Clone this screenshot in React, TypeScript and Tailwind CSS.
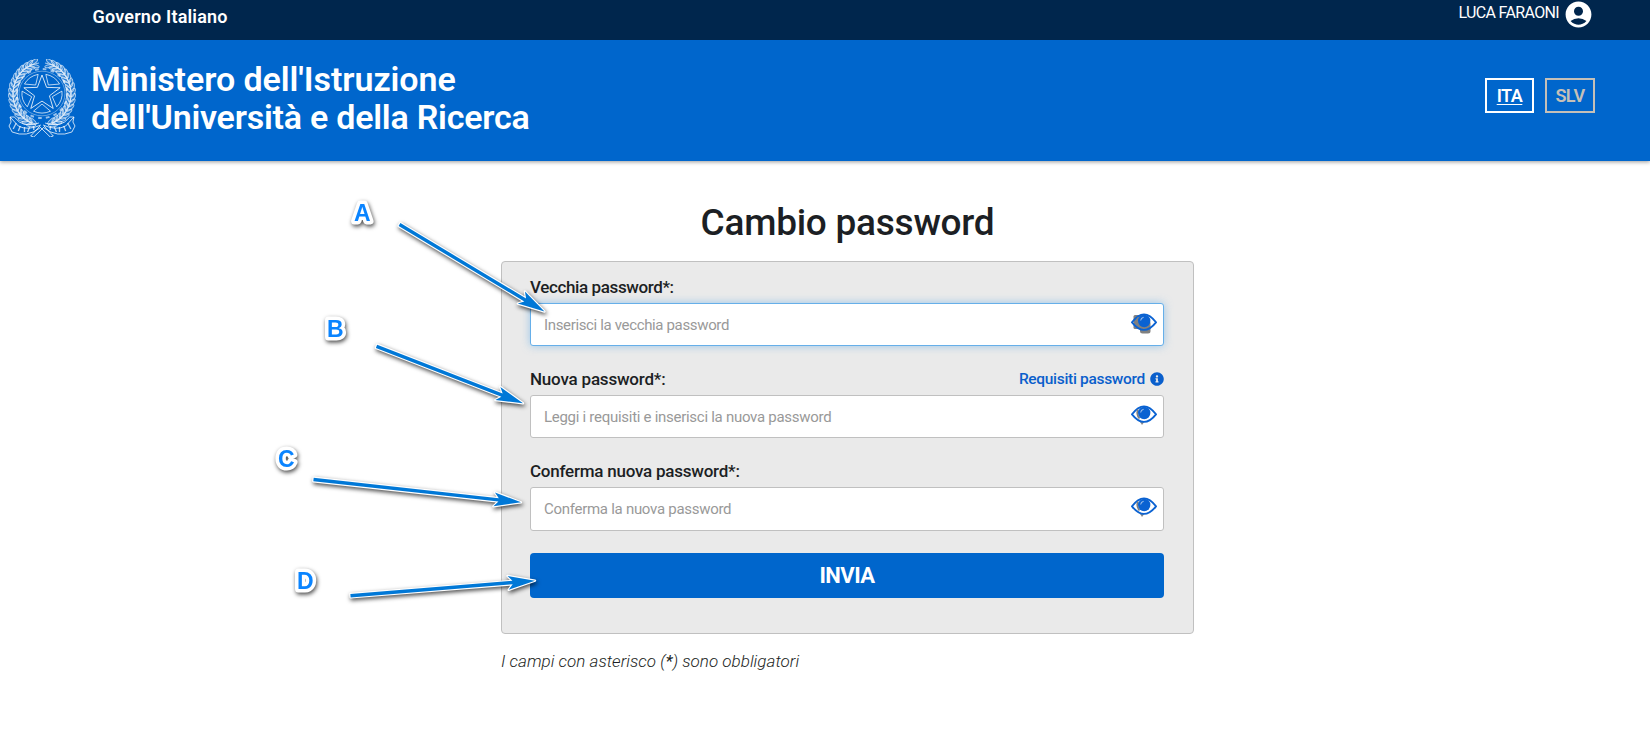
import { FaInfoCircle } from 'react-icons/fa';
import { MdAccountCircle } from 'react-icons/md';

const fields = [
  {
    id: 'old',
    label: 'Vecchia password*:',
    placeholder: 'Inserisci la vecchia password',
    labelClass: 'tracking-[-0.38px]',
    boxClass: 'h-[43px] border-[#66afe9] shadow-[0_0_8px_rgba(102,175,233,0.6)]',
    inputClass: 'tracking-[-0.35px]',
  },
  {
    id: 'new',
    label: 'Nuova password*:',
    placeholder: 'Leggi i requisiti e inserisci la nuova password',
    labelClass: 'tracking-[-0.2px]',
    boxClass: 'h-[43px] border-[#c0c0c0]',
    inputClass: 'tracking-[-0.28px]',
  },
  {
    id: 'confirm',
    label: 'Conferma nuova password*:',
    placeholder: 'Conferma la nuova password',
    labelClass: 'tracking-[-0.23px]',
    boxClass: 'h-[44px] border-[#c0c0c0]',
    inputClass: 'tracking-[-0.28px]',
  },
];

// x, y = start of the arrow; tx, ty = tip
const arrows = [
  { x: 399.5, y: 224.5, tx: 544.5, ty: 311.5, letter: 'A', lx: 354, ly: 221 },
  { x: 376.5, y: 346.3, tx: 523, ty: 403.3, letter: 'B', lx: 327, ly: 336.5 },
  { x: 313.5, y: 479.5, tx: 521, ty: 502.3, letter: 'C', lx: 278, ly: 466.5 },
  { x: 350.5, y: 595.7, tx: 535, ty: 580.7, letter: 'D', lx: 297, ly: 588.5 },
];

function polar(cx: number, cy: number, r: number, deg: number) {
  const a = (deg * Math.PI) / 180;
  return [cx + r * Math.sin(a), cy - r * Math.cos(a)];
}

function Emblem() {
  const star = Array.from({ length: 10 }, (_, i) => polar(33, 34.5, i % 2 ? 7.6 : 18.5, i * 36).join(',')).join(' ');
  const leaves = Array.from({ length: 17 }, (_, i) => 14 + i * 9);

  return (
    <svg className="h-[78px] w-[68px] shrink-0" viewBox="0 0 66 78" preserveAspectRatio="none" fill="none" stroke="#fff" strokeWidth="0.95">
      <circle cx="33" cy="34.5" r="24.5" strokeWidth="2" strokeDasharray="3.6 4.1" opacity="0.6" />
      <circle cx="33" cy="34.5" r="22.3" opacity="0.4" />
      <polygon points={star} opacity="0.85" />
      {[36, 108, 180, 252, 324].map((d) => {
        const a = polar(33, 34.5, 10.5, d);
        const b = polar(33, 34.5, 19.5, d - 25);
        const c = polar(33, 34.5, 19.5, d + 25);
        return (
          <path key={d} opacity="0.75" d={`M${a[0]} ${a[1]}L${b[0]} ${b[1]}A19.5 19.5 0 0 1 ${c[0]} ${c[1]}Z`} />
        );
      })}
      {[-1, 1].map((s) => (
        <g key={s} transform={s === 1 ? 'translate(33 0)' : 'translate(33 0) scale(-1 1)'}>
          {leaves.map((d) => {
            const a = (d * Math.PI) / 180;
            const x = 28 * Math.sin(a);
            const y = 35 - 31 * Math.cos(a);
            return (
              <g key={d} transform={`translate(${x} ${y}) rotate(${d})`} opacity="0.65">
                <ellipse cx="0" cy="-2.3" rx="4.6" ry="1.7" transform="rotate(22)" fill="#fff" fillOpacity="0.2" />
                <ellipse cx="0" cy="2.3" rx="4.4" ry="1.5" transform="rotate(-22)" fill="#fff" fillOpacity="0.2" />
                <path d="M-4 0H4" />
              </g>
            );
          })}
          <path opacity="0.8" d="M1 66Q14 72 23 67L31 58L30 63L32 67L29 73Q15 79 2 69M3 64Q14 68 22 63L27 58L31 58M2 67L11 77L8 78L-2 68" />
          <path opacity="0.7" d="M8 67V71M12 68L14 73M17 68V73M21 67L23 72M25 64L28 70" strokeWidth="1.3" />
        </g>
      ))}
    </svg>
  );
}

function Eye({ first }: { first?: boolean }) {
  return (
    <svg className="absolute top-[9px] right-[6.5px] h-[22px] w-[26px]" viewBox="0 0 26 22">
      {first ? (
        <g fill="#808080">
          <rect x="2.5" y="2" width="13" height="14" rx="1.5" />
          <rect x="9" y="8" width="10.5" height="12.5" rx="2.5" />
        </g>
      ) : (
        <path d="M6 12L11 20L15.5 14" fill="#888" />
      )}
      <path d="M1 9.3Q13 -6.5 25 9.3Q13 24.5 1 9.3Z" fill={first ? 'none' : '#fff'} stroke="#0a62d2" strokeWidth="1.9" />
      <path d="M7 4.5Q5 9 8.5 13.5" fill="none" stroke="#808080" strokeWidth="1.8" />
      <circle cx="13.2" cy="8" r="6.2" fill="#0a62d2" />
      <path d="M9.6 7.5Q10 4.8 12.6 4.2" fill="none" stroke="#9dbde8" strokeWidth="1.1" />
    </svg>
  );
}

function Annotations() {
  return (
    <svg className="pointer-events-none absolute top-0 left-0 h-[736px] w-[600px] drop-shadow-[1.5px_2px_2px_rgba(0,0,0,0.7)]" viewBox="0 0 600 736">
      {arrows.map((a) => {
        const len = Math.hypot(a.tx - a.x, a.ty - a.y);
        const angle = (Math.atan2(a.ty - a.y, a.tx - a.x) * 180) / Math.PI;
        return (
          <g key={a.letter} strokeLinejoin="round">
            <path
              transform={`translate(${a.tx} ${a.ty}) rotate(${angle})`}
              d={`M0 0L-27 -7L-22.5 -1.7H${-len}V1.7H-22.5L-27 7Z`}
              fill="#0078d7"
              stroke="#fff"
              strokeWidth="2.4"
              paintOrder="stroke"
            />
            <text
              x={a.lx}
              y={a.ly}
              className="font-['Liberation_Sans',sans-serif] text-[23px] font-bold"
              fill="#0a84ff"
              stroke="#fff"
              strokeWidth="7"
              paintOrder="stroke"
            >
              {a.letter}
            </text>
          </g>
        );
      })}
    </svg>
  );
}

export default function App() {
  return (
    <div className="relative h-[736px] w-[1650px] overflow-hidden bg-white font-[Roboto,sans-serif] text-[#1c1f24]">
      <header className="text-white shadow-[0_1px_4px_rgba(0,0,0,0.4)]">
        <div className="flex h-10 justify-between bg-[#00264d] pr-[56px] pl-[92.5px]">
          <span className="pt-[5px] text-[18px] leading-6 font-semibold tracking-[0.18px]">Governo Italiano</span>
          <div className="flex">
            <span className="pt-[2px] text-[16px] leading-[22px] tracking-[-0.65px]">LUCA FARAONI</span>
            <MdAccountCircle className="-mt-[1px] ml-[4px] h-[31px] w-[31px]" />
          </div>
        </div>
        <div className="flex h-[121px] bg-[#0066cc] pr-[55px] pl-2">
          <div className="pt-[19px]">
            <Emblem />
          </div>
          <h1 className="ml-[15px] pt-[20px] text-[34px] leading-[38px] font-semibold">
            <span className="block tracking-[-0.06px]">Ministero dell'Istruzione</span>
            <span className="block tracking-[-0.23px]">dell'Università e della Ricerca</span>
          </h1>
          <div className="mt-[38px] ml-auto flex gap-[11px] text-[18px] leading-[31px] font-semibold tracking-[-0.5px]">
            <a className="h-[35px] w-[49px] border-2 border-white text-center underline underline-offset-2">ITA</a>
            <a className="h-[35px] w-[50px] border-2 border-[#c5c0b8] text-center text-[#c5c0b8]">SLV</a>
          </div>
        </div>
      </header>

      <main className="ml-[501px] w-[693px]">
        <h2 className="h-[100px] pt-[37px] text-center text-[37px] leading-[50px] font-medium tracking-[-0.25px]">Cambio password</h2>
        <form className="h-[373px] rounded border border-[#c0c0c0] bg-[#eaeaea] px-[29px] pt-[14px] pl-[28px]">
          {fields.map((f) => (
            <div key={f.id} className="mb-[22px]">
              <div className="flex h-[27px] justify-between">
                <label className={`text-[17px] leading-[23px] font-medium ${f.labelClass}`}>{f.label}</label>
                {f.id === 'new' && (
                  <a className="flex h-[22px] items-center text-[15.5px] leading-[22px] font-medium tracking-[-0.31px] text-[#0a5fcc]">
                    Requisiti password
                    <FaInfoCircle className="ml-[5px] h-[14px] w-[14px]" />
                  </a>
                )}
              </div>
              <div className={`relative rounded-[3px] border bg-white ${f.boxClass}`}>
                <input
                  className={`h-full w-full bg-transparent px-[13px] text-[15px] outline-none placeholder:text-[#999] ${f.inputClass}`}
                  placeholder={f.placeholder}
                />
                <Eye first={f.id === 'old'} />
              </div>
            </div>
          ))}
          <button type="button" className="h-[45px] w-full rounded bg-[#0066cc] text-[22px] font-bold tracking-[-0.5px] text-white">
            INVIA
          </button>
        </form>
        <p className="pt-[15px] text-[17px] leading-6 font-light tracking-[0.02px] italic">
          I campi con asterisco (<b>*</b>) sono obbligatori
        </p>
      </main>

      <Annotations />
    </div>
  );
}
